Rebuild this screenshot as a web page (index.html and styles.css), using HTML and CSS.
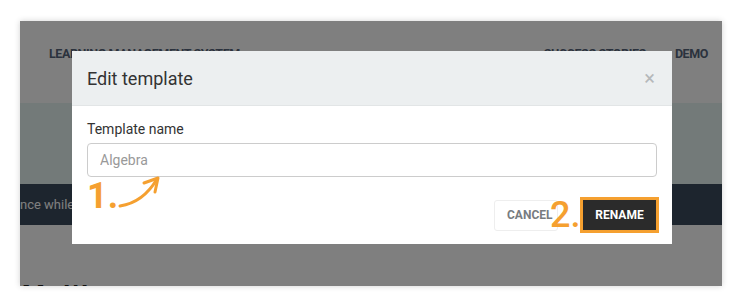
FILE: index.html
```html
<!DOCTYPE html>
<html lang="en">
<head>
    <meta charset="UTF-8">
    <meta name="viewport" content="width=device-width, initial-scale=1.0">
    <title>Edit template</title>
    <link rel="stylesheet" href="styles.css">
</head>
<body>
    <div class="shot">
        <!-- page behind the dialog -->
        <div class="page">
            <div class="nav">
                <span class="brand">LEARNING MANAGEMENT SYSTEM</span>
                <span class="links"><span>SUCCESS STORIES</span><span>DEMO</span></span>
            </div>
            <div class="hero"></div>
            <div class="notice">nce while saving your changes</div>
            <div class="content"><span class="heading">My Wo</span></div>
        </div>
        <div class="backdrop"></div>

        <div class="modal">
            <div class="modal-header">
                <h4>Edit template</h4>
                <span class="close">&times;</span>
            </div>
            <div class="modal-body">
                <label for="name">Template name</label>
                <input id="name" type="text" placeholder="Algebra">
            </div>
            <div class="modal-footer">
                <button class="btn btn-cancel">Cancel</button>
                <span class="mark">
                    <button class="btn btn-rename">Rename</button>
                </span>
            </div>

            <span class="step step-1">1.</span>
            <svg class="arrow" width="44" height="36" viewBox="0 0 44 36">
                <path d="M2 32 C 15 30, 29 22, 39 5" fill="none" stroke="#f5a030" stroke-width="3" stroke-linecap="round"/>
                <path d="M26 9 L 40 4 L 37 18" fill="none" stroke="#f5a030" stroke-width="3" stroke-linecap="round" stroke-linejoin="round"/>
            </svg>
            <span class="step step-2">2.</span>
        </div>
    </div>
</body>
</html>
```

FILE: styles.css
```css
body {
    margin: 0;
    background: #fff;
    font-family: Roboto, "Liberation Sans", sans-serif;
}
.shot {
    position: relative;
    width: 702px;
    height: 265px;
    margin: 21px 20px;
    overflow: hidden;
    box-shadow: 0 0 6px rgba(0, 0, 0, 0.18);
}
.page {
    background: #fff;
    height: 100%;
}
.nav {
    height: 82px;
    display: flex;
    justify-content: space-between;
    align-items: flex-start;
    padding: 25px 14px 0 29px;
    box-sizing: border-box;
    font-size: 12.5px;
    font-weight: 700;
    color: #56657a;
    letter-spacing: -0.4px;
}
.links span {
    margin-left: 29px;
}
.hero {
    height: 81px;
    background: #e6f4f2;
}
.notice {
    height: 41px;
    background: #3a4a5c;
    color: #fff;
    font-size: 13px;
    line-height: 41px;
    margin-left: -8px;
    padding-left: 8px;
    white-space: nowrap;
}
.content {
    padding: 55px 0 0 2px;
}
.heading {
    font-size: 26px;
    font-weight: 700;
    color: #222;
}
.backdrop {
    position: absolute;
    inset: 0;
    background: rgba(0, 0, 0, 0.5);
}
.modal {
    position: absolute;
    left: 52px;
    top: 30px;
    width: 600px;
    height: 193px;
    background: #fff;
}
.modal-header {
    height: 55px;
    background: #eceff0;
    border-bottom: 1px solid #e2e5e6;
    box-sizing: border-box;
    display: flex;
    justify-content: space-between;
    align-items: center;
    padding: 0 15px;
}
.modal-header h4 {
    margin: 0;
    font-size: 18px;
    font-weight: 400;
    color: #333;
}
.close {
    font-size: 20px;
    color: #b5b8ba;
    margin-right: 2px;
}
.modal-body {
    padding: 15px 15px 0;
}
.modal-body label {
    display: block;
    font-size: 14px;
    color: #333;
    margin-bottom: 6px;
}
.modal-body input {
    width: 100%;
    height: 34px;
    box-sizing: border-box;
    border: 1px solid #ccc;
    border-radius: 4px;
    padding: 0 12px;
    font-family: inherit;
    font-size: 14px;
}
.modal-body input::placeholder {
    color: #999;
}
.modal-footer {
    display: flex;
    justify-content: flex-end;
    align-items: center;
    gap: 22px;
    padding: 20px 13px 0;
}
.btn {
    font-family: inherit;
    font-size: 12px;
    font-weight: 700;
    text-transform: uppercase;
    border-radius: 3px;
    cursor: pointer;
}
.btn-cancel {
    width: 64px;
    height: 31px;
    background: #fff;
    border: 1px solid #eee;
    color: #787c80;
    text-align: left;
    padding: 0 0 0 12px;
}
.mark {
    border: 3px solid #f5a030;
    display: flex;
}
.btn-rename {
    width: 73px;
    height: 30px;
    background: #2b2b2b;
    color: #fff;
    border: none;
    border-radius: 0;
}
.step {
    position: absolute;
    color: #f5a030;
    font-size: 36px;
    font-weight: 700;
    line-height: 1;
}
.step-1 {
    left: 15px;
    top: 127px;
}
.step-2 {
    left: 478px;
    top: 146px;
    font-weight: 500;
}
.arrow {
    position: absolute;
    left: 46px;
    top: 123px;
}
```
